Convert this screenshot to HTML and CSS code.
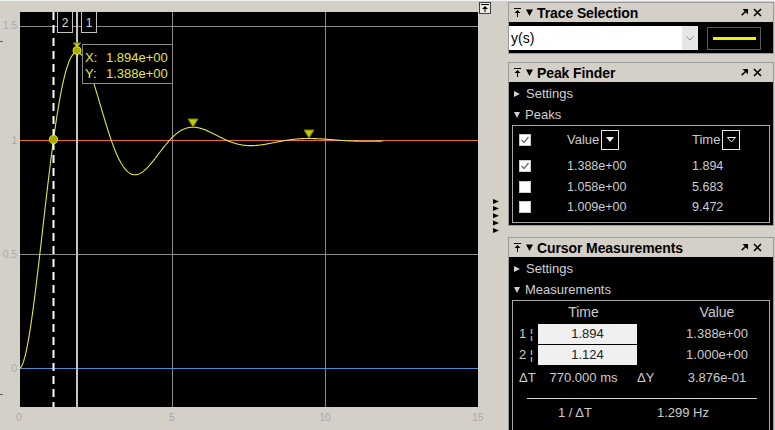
FILE: index.html
```html
<!DOCTYPE html>
<html>
<head>
<meta charset="utf-8">
<link rel="stylesheet" href="styles.css">
</head>
<body>
<div class="app">
  <svg class="plot" viewBox="0 1 478 429" width="478" height="429">
    <line x1="0" y1="41.5" x2="3" y2="41.5" stroke="#606060"/>
    <line x1="0" y1="394.5" x2="3" y2="394.5" stroke="#606060"/>
    <rect x="20" y="12" width="458" height="395" fill="#000"/>
    <g stroke="#8a8a8a" stroke-width="1">
      <line x1="172.5" y1="12" x2="172.5" y2="407"/>
      <line x1="325.5" y1="12" x2="325.5" y2="407"/>
      <line x1="20" y1="26.5" x2="478" y2="26.5"/>
      <line x1="20" y1="254.5" x2="478" y2="254.5"/>
    </g>
    <line x1="20" y1="140.5" x2="478" y2="140.5" stroke="#e8694c"/>
    <line x1="20" y1="368.5" x2="478" y2="368.5" stroke="#4a8ed8"/>
    <polyline id="curve" fill="none" stroke="#e4e44a" stroke-width="1.1" points=""/>
    <line x1="53.5" y1="12" x2="53.5" y2="407" stroke="#ffffff" stroke-width="2" stroke-dasharray="8 5"/>
    <line x1="77" y1="12" x2="77" y2="407" stroke="#c4c4c4" stroke-width="2"/>
    <g class="tick-y" fill="#a8a8a8" font-size="10" text-anchor="end">
      <text x="17" y="29">1.5</text>
      <text x="17" y="144">1</text>
      <text x="17" y="258">0.5</text>
      <text x="17" y="372">0</text>
    </g>
    <g class="tick-x" fill="#a8a8a8" font-size="10.5" text-anchor="middle">
      <text x="19" y="421">0</text>
      <text x="172" y="421">5</text>
      <text x="325" y="421">10</text>
    </g>
    <rect x="57.5" y="11.5" width="15" height="21" fill="#000" stroke="#c4c4c4"/>
    <text x="65" y="27" fill="#d8d8d8" font-size="12" text-anchor="middle">2</text>
    <rect x="81.5" y="11.5" width="15" height="21" fill="#000" stroke="#c4c4c4"/>
    <text x="89" y="27" fill="#d8d8d8" font-size="12" text-anchor="middle">1</text>
    <polygon points="188,119 198,119 193,127" fill="#c8c800" stroke="#7a7a00"/>
    <polygon points="304,130 314,130 309,138" fill="#c8c800" stroke="#7a7a00"/>
    <polygon points="73,43 81,43 77,47" fill="#c8c800" stroke="#7a7a00"/>
    <circle cx="77" cy="50.5" r="4" fill="#a8a800" stroke="#e8e800"/>
    <circle cx="53.5" cy="139.5" r="4.2" fill="#a8a800" stroke="#e8e800"/>
    <rect x="82.5" y="44.5" width="90" height="39" fill="#000" stroke="#8a8a8a"/>
    <g fill="#e4e44a" font-size="13">
      <text x="85" y="62">X:</text><text x="106" y="62">1.894e+00</text>
      <text x="85" y="78">Y:</text><text x="106" y="78">1.388e+00</text>
    </g>
  </svg>

  <div class="gutter">
    <div class="undock">
      <svg width="8" height="8" viewBox="0 0 8 8"><rect x="0" y="0" width="8" height="1" fill="#000"/><polygon points="4,2 7,5 1,5" fill="#000"/><rect x="3.5" y="4" width="1" height="4" fill="#000"/></svg>
    </div>
    <svg class="arrows" width="7" height="34" viewBox="0 0 7 34">
      <polygon points="0,0 6,2.5 0,5" fill="#000"/>
      <polygon points="0,7 6,9.5 0,12" fill="#000"/>
      <polygon points="0,14.3 6,16.8 0,19.3" fill="#000"/>
      <polygon points="0,21.6 6,24.1 0,26.6" fill="#000"/>
      <polygon points="0,29 6,31.5 0,34" fill="#000"/>
    </svg>
    <span class="xlabel-end">15</span>
  </div>

  <div class="side">
    <section class="panel panel-trace">
      <header class="ph">
        <svg class="ic-pin" width="7" height="9" viewBox="0 0 7 9"><rect x="0" y="0" width="7" height="1" fill="#000"/><polygon points="3.5,2 6.5,5 0.5,5" fill="#000"/><rect x="3" y="4" width="1" height="5" fill="#000"/></svg>
        <svg class="ic-down" width="7" height="7" viewBox="0 0 7 7"><polygon points="0,0.5 7,0.5 3.5,7" fill="#000"/></svg>
        <span class="title">Trace Selection</span>
        <svg class="ic-undock" width="7" height="7" viewBox="0 0 7 7"><polygon points="1.5,0 7,0 7,5.5" fill="#000"/><line x1="0.7" y1="6.3" x2="4.5" y2="2.5" stroke="#000" stroke-width="1.6"/></svg>
        <svg class="ic-close" width="9" height="9" viewBox="0 0 9 9"><path d="M1 1L8 8M8 1L1 8" stroke="#000" stroke-width="1.6"/></svg>
      </header>
      <div class="pb trace-body">
        <div class="combo">
          <span class="combo-text">y(s)</span>
          <span class="combo-btn"><svg width="8" height="5" viewBox="0 0 8 5"><path d="M0.5 0.5L4 4L7.5 0.5" fill="none" stroke="#8a8a8a" stroke-width="1"/></svg></span>
        </div>
        <div class="swatch"><i></i></div>
      </div>
    </section>

    <section class="panel panel-peak">
      <header class="ph">
        <svg class="ic-pin" width="7" height="9" viewBox="0 0 7 9"><rect x="0" y="0" width="7" height="1" fill="#000"/><polygon points="3.5,2 6.5,5 0.5,5" fill="#000"/><rect x="3" y="4" width="1" height="5" fill="#000"/></svg>
        <svg class="ic-down" width="7" height="7" viewBox="0 0 7 7"><polygon points="0,0.5 7,0.5 3.5,7" fill="#000"/></svg>
        <span class="title">Peak Finder</span>
        <svg class="ic-undock" width="7" height="7" viewBox="0 0 7 7"><polygon points="1.5,0 7,0 7,5.5" fill="#000"/><line x1="0.7" y1="6.3" x2="4.5" y2="2.5" stroke="#000" stroke-width="1.6"/></svg>
        <svg class="ic-close" width="9" height="9" viewBox="0 0 9 9"><path d="M1 1L8 8M8 1L1 8" stroke="#000" stroke-width="1.6"/></svg>
      </header>
      <div class="pb peak-body">
        <div class="sect"><span class="tri-r"></span>Settings</div>
        <div class="sect"><span class="tri-d"></span>Peaks</div>
        <div class="box peak-table">
          <div class="prow phead">
            <span class="cb checked"><svg width="10" height="10" viewBox="0 0 10 10"><path d="M1.5 5L4 7.5L8.5 2" fill="none" stroke="#707070" stroke-width="1.3"/></svg></span>
            <span class="hcell">Value<span class="sortbtn"><svg width="8" height="6" viewBox="0 0 8 6"><polygon points="0,0 8,0 4,5" fill="#f0f0f0"/></svg></span></span>
            <span class="hcell">Time<span class="sortbtn"><svg width="9" height="6" viewBox="0 0 9 6"><polygon points="0.5,0.5 8.5,0.5 4.5,5" fill="none" stroke="#f0f0f0" stroke-width="1"/></svg></span></span>
          </div>
          <div class="prow">
            <span class="cb checked"><svg width="10" height="10" viewBox="0 0 10 10"><path d="M1.5 5L4 7.5L8.5 2" fill="none" stroke="#707070" stroke-width="1.3"/></svg></span>
            <span>1.388e+00</span><span>1.894</span>
          </div>
          <div class="prow">
            <span class="cb"></span><span>1.058e+00</span><span>5.683</span>
          </div>
          <div class="prow">
            <span class="cb"></span><span>1.009e+00</span><span>9.472</span>
          </div>
        </div>
      </div>
    </section>

    <section class="panel panel-cursor">
      <header class="ph">
        <svg class="ic-pin" width="7" height="9" viewBox="0 0 7 9"><rect x="0" y="0" width="7" height="1" fill="#000"/><polygon points="3.5,2 6.5,5 0.5,5" fill="#000"/><rect x="3" y="4" width="1" height="5" fill="#000"/></svg>
        <svg class="ic-down" width="7" height="7" viewBox="0 0 7 7"><polygon points="0,0.5 7,0.5 3.5,7" fill="#000"/></svg>
        <span class="title">Cursor Measurements</span>
        <svg class="ic-undock" width="7" height="7" viewBox="0 0 7 7"><polygon points="1.5,0 7,0 7,5.5" fill="#000"/><line x1="0.7" y1="6.3" x2="4.5" y2="2.5" stroke="#000" stroke-width="1.6"/></svg>
        <svg class="ic-close" width="9" height="9" viewBox="0 0 9 9"><path d="M1 1L8 8M8 1L1 8" stroke="#000" stroke-width="1.6"/></svg>
      </header>
      <div class="pb cursor-body">
        <div class="sect"><span class="tri-r"></span>Settings</div>
        <div class="sect"><span class="tri-d"></span>Measurements</div>
        <div class="box meas">
          <div class="mrow mhead"><span></span><span class="c">Time</span><span></span><span class="c">Value</span></div>
          <div class="mrow"><span class="idx">1 ¦</span><span class="field">1.894</span><span></span><span class="c">1.388e+00</span></div>
          <div class="mrow"><span class="idx">2 ¦</span><span class="field">1.124</span><span></span><span class="c">1.000e+00</span></div>
          <div class="mrow mdelta"><span class="idx">ΔT</span><span class="c">770.000 ms</span><span>ΔY</span><span class="c">3.876e-01</span></div>
          <div class="sep"></div>
          <div class="frow"><span>1 / ΔT</span><span>1.299 Hz</span></div>
        </div>
      </div>
    </section>
  </div>
</div>
<script src="script.js"></script>
</body>
</html>
```

FILE: styles.css
```css
* { box-sizing: border-box; margin: 0; padding: 0; }
html, body { width: 775px; height: 430px; overflow: hidden; }
body {
  background: #d4d0c8;
  font-family: "Liberation Sans", Arial, sans-serif;
  color: #000;
  border-top: 1px solid #f2f2f2;
}
.app { display: flex; height: 429px; }
.plot { display: block; width: 478px; height: 429px; font-family: "Liberation Sans", Arial, sans-serif; }

.gutter { width: 30px; display: flex; flex-direction: column; align-items: flex-start; padding: 1px 0 0 1px; position: relative; }
.undock {
  width: 12px; height: 12px;
  border: 1px solid #404040;
  background: #ece9e4;
  display: flex; align-items: center; justify-content: center;
}
.arrows { display: block; margin: 185px 0 0 14px; }
.xlabel-end {
  position: absolute; left: -6px; top: 410px;
  font-size: 10.5px; color: #a8a8a8; line-height: 12px;
}

.side { width: 267px; padding-top: 1px; display: flex; flex-direction: column; }
.panel { width: 266px; border: 1px solid #9a9a9a; background: #d4d0c8; }
.panel-peak { margin-top: 8px; }
.panel-cursor { margin-top: 11px; flex: 1; display: flex; flex-direction: column; border-bottom: none; }

.ph {
  height: 19px;
  display: flex; align-items: center;
  padding: 0 0 0 5px;
}
.ph .ic-pin { margin-right: 5px; }
.ph .ic-down { margin-right: 4px; }
.ph .title { font-weight: bold; font-size: 14px; flex: 1; letter-spacing: -0.1px; }
.ph .ic-undock { margin-right: 5px; }
.ph .ic-close { margin-right: 11px; }

.pb { background: #000; color: #cfcfcf; font-size: 13px; }

.trace-body { height: 31px; display: flex; align-items: flex-start; padding-top: 4px; }
.combo {
  width: 189px; height: 24px;
  background: #fff;
  display: flex; align-items: stretch;
}
.combo-text { flex: 1; color: #000; font-size: 14px; line-height: 24px; padding-left: 2px; }
.combo-btn { width: 16px; background: #e6e6e6; display: flex; align-items: center; justify-content: center; }
.swatch {
  margin: 1px 0 0 9px;
  width: 54px; height: 23px;
  border: 1px solid #5a5a5a;
  display: flex; align-items: center; justify-content: center;
}
.swatch i { display: block; width: 43px; height: 3px; background: #f0f000; }

.peak-body { height: 143px; padding: 1px 3px 0 3px; }
.sect { height: 21px; display: flex; align-items: center; padding-left: 2px; color: #d0d0d0; }
.tri-r {
  width: 0; height: 0; margin-right: 6px;
  border-left: 6px solid #d0d0d0;
  border-top: 3.5px solid transparent; border-bottom: 3.5px solid transparent;
}
.tri-d {
  width: 0; height: 0; margin-right: 5px;
  border-top: 6px solid #d0d0d0;
  border-left: 3.5px solid transparent; border-right: 3.5px solid transparent;
}
.box { border: 1px solid #a8a8a8; }
.peak-table { height: 98px; padding: 0 0 0 6px; }
.prow {
  display: grid; grid-template-columns: 48px 125px 1fr;
  align-items: center; height: 20.5px; font-size: 12.5px; color: #cccccc;
}
.prow.phead { height: 27px; margin-bottom: 3px; font-size: 13px; }
.cb { width: 12px; height: 12px; background: #fff; border: 1px solid #c8c8c8; display: flex; align-items: center; justify-content: center; }
.hcell { display: flex; align-items: center; }
.sortbtn {
  margin-left: 2px; width: 18px; height: 20px;
  border: 1px solid #e8e8e8;
  display: flex; align-items: center; justify-content: center;
}

.cursor-body { flex: 1; padding: 1px 3px 0 3px; }
.meas { height: 140px; border-bottom: none; }
.mrow {
  display: grid; grid-template-columns: 25px 99px 36px 1fr;
  align-items: center; height: 21px; font-size: 13px; color: #cccccc;
}
.mrow.mhead { height: 22px; font-size: 14px; }
.mrow .c { text-align: center; padding-right: 8px; }
.mrow .idx { padding-left: 6px; }
.mrow .field {
  height: 20px; background: #f0f0f0; color: #202020;
  text-align: center; line-height: 20px;
}
.mrow.mdelta { height: 22px; margin-top: 1px; }
.mdelta .c:first-of-type { padding-right: 10px; }
.sep { margin: 10px 12px 0 14px; height: 1px; background: #d8d8d8; }
.frow {
  display: grid; grid-template-columns: 124px 1fr;
  height: 26px; align-items: center; font-size: 13px; color: #cccccc;
}
.frow span { text-align: center; }
.frow span + span { padding-right: 40px; }
```

FILE: script.js
```js
(function () {
  var wd = Math.sqrt(2.75);
  var pts = [];
  for (var i = 0; i <= 595; i++) {
    var t = i * 0.02;
    var y = 1 - Math.exp(-0.5 * t) * (Math.cos(wd * t) + (0.5 / wd) * Math.sin(wd * t));
    pts.push((19 + 30.6 * t).toFixed(2) + ',' + (368.5 - 228 * y).toFixed(2));
  }
  document.getElementById('curve').setAttribute('points', pts.join(' '));
})();
```
